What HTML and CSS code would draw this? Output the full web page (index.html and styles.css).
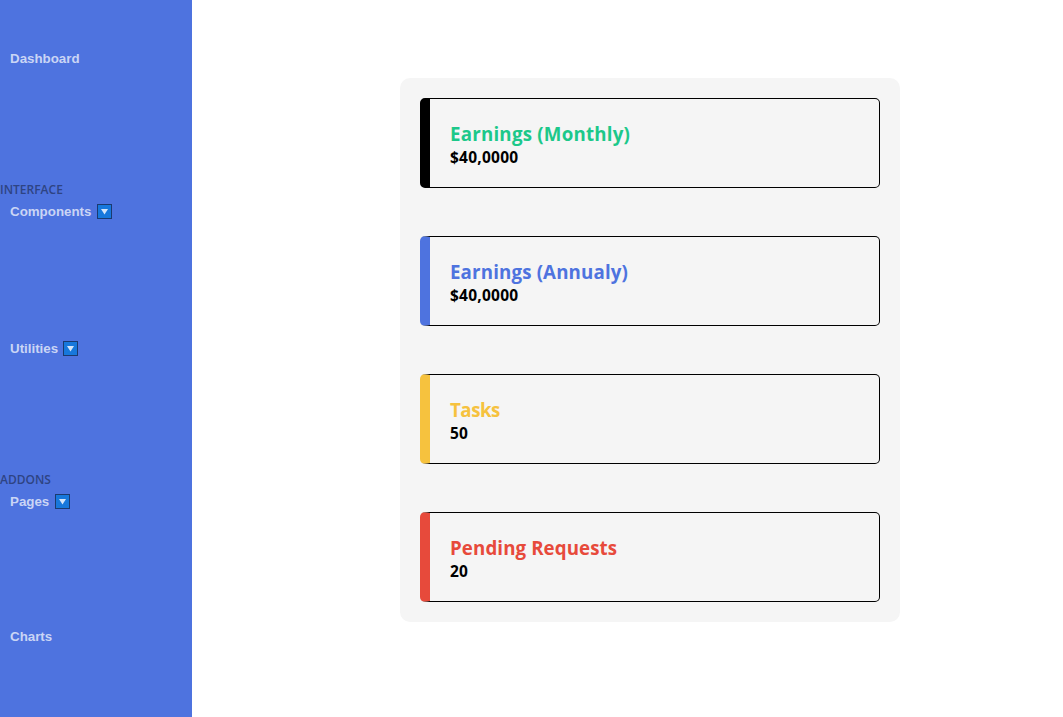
FILE: index.html
```html
<!DOCTYPE html>
<html lang="en">
<head>
<meta charset="utf-8">
<title>Dashboard</title>
<link rel="stylesheet" href="styles.css">
</head>
<body>
<div class="layout">
  <nav class="sidebar">
    <div class="group dashboard"><button class="link">Dashboard</button></div>
    <div class="group components">
      <h2 class="heading">INTERFACE</h2>
      <button class="link">Components <svg class="arrow" viewBox="0 0 15 15"><rect class="box" x=".5" y=".5" width="14" height="14"/><path class="tri" d="M4 5h7L7.5 10.5z"/></svg></button>
    </div>
    <div class="group utilities"><button class="link">Utilities <svg class="arrow" viewBox="0 0 15 15"><rect class="box" x=".5" y=".5" width="14" height="14"/><path class="tri" d="M4 5h7L7.5 10.5z"/></svg></button></div>
    <div class="group pages">
      <h2 class="heading addons">ADDONS</h2>
      <button class="link">Pages <svg class="arrow" viewBox="0 0 15 15"><rect class="box" x=".5" y=".5" width="14" height="14"/><path class="tri" d="M4 5h7L7.5 10.5z"/></svg></button>
    </div>
    <div class="group charts"><button class="link">Charts</button></div>
  </nav>
  <main class="main">
    <section class="panel">
      <article class="card monthly"><h3 class="title">Earnings (Monthly)</h3><p class="value">$40,0000</p></article>
      <article class="card annual"><h3 class="title">Earnings (Annualy)</h3><p class="value">$40,0000</p></article>
      <article class="card tasks"><h3 class="title">Tasks</h3><p class="value">50</p></article>
      <article class="card requests"><h3 class="title">Pending Requests</h3><p class="value">20</p></article>
    </section>
  </main>
</div>
</body>
</html>
```
FILE: styles.css
```css
* { box-sizing: border-box; }
body { margin: 0; background: #fff; font-family: "Open Sans", "Noto Sans", sans-serif; }
.layout { display: flex; height: 717px; overflow: hidden; }
.sidebar { width: 192px; background: #4e73df; padding-top: 48px; flex: none; }
.dashboard { height: 133px; }
.components { height: 157px; }
.utilities { height: 133px; }
.pages { height: 155px; }
.heading { margin: 0; height: 20px; font-size: 12px; line-height: 17px; font-weight: 600; color: #2e4483; }
.link {
  display: flex; align-items: center; gap: 5.6px; height: 21px;
  margin: 0; padding: 1px 10px 0; border: 0; background: none;
  font: bold 13.333px/20px "Liberation Sans", Arial, sans-serif; color: #cad5f5;
}
.arrow { display: block; width: 15px; height: 15px; margin-top: -2px; }
.utilities .link { gap: 5px; }
.box { fill: #1778dc; stroke: #1b3a70; }
.tri { fill: #d5e5fa; }
.main { flex: 1; display: flex; align-items: flex-start; padding: 78px 0 0 208px; }
.panel { width: 500px; height: 544px; padding: 20px; border-radius: 10px; background: #f5f5f5; display: flex; flex-direction: column; gap: 48px; }
.card { height: 90px; padding: 22px 20px 0; border: 1px solid #000; border-left-width: 10px; border-radius: 5px; }
.title { margin: 0; font-size: 18.72px; line-height: 25px; font-weight: 700; }
.value { margin: 0; font-size: 15.5px; letter-spacing: .25px; line-height: 23px; font-weight: 700; color: #000; }
.monthly .title { color: #1cc88a; letter-spacing: .22px; }
.annual { border-left-color: #4e73df; }
.annual .title { color: #4e73df; letter-spacing: .15px; }
.tasks { border-left-color: #f6c23e; }
.tasks .title { color: #f6c23e; letter-spacing: -.5px; }
.requests { border-left-color: #e74a3b; }
.requests .title { color: #e74a3b; letter-spacing: .1px; }
```
